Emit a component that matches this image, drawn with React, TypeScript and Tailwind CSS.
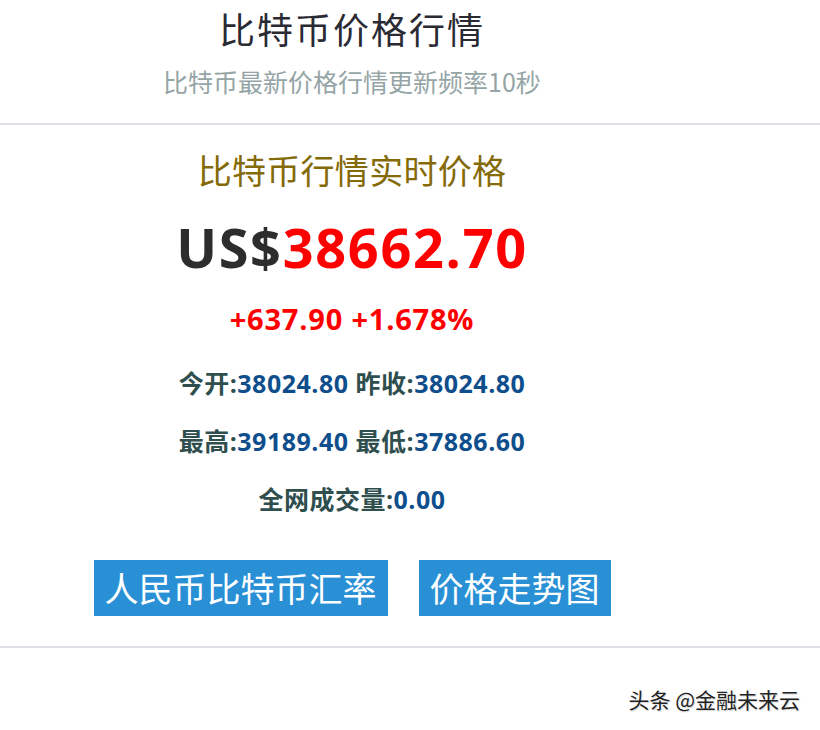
import React from "react";

const cjk = { fontFamily: '"Noto Sans CJK SC", sans-serif' };
const num = { fontFamily: '"Open Sans", "Noto Sans CJK SC", sans-serif' };

function Info({ items }: { items: [string, string][] }) {
  return (
    <div className="h-[32px] leading-[32px] text-[25px] tracking-[0.5px] font-bold" style={num}>
      {items.map(([k, v], i) => (
        <React.Fragment key={i}>
          {i > 0 && " "}
          <span className="text-[#2f4f4f]">{k}:</span>
          <span className="text-[#0f4e8c]">{v}</span>
        </React.Fragment>
      ))}
    </div>
  );
}

export default function App() {
  return (
    <div className="w-[820px] h-[730px] bg-white overflow-hidden" style={cjk}>
      <div className="w-[704px] text-center pt-[8px]">
        <div className="text-[36px] leading-[40px] tracking-[2px] text-[#2a2a33]" style={{ fontFamily: '"Noto Sans CJK SC", serif' }}>
          比特币价格行情
        </div>
        <div className="mt-[18px] text-[25px] leading-[30px] text-[#95a5a6]">
          比特币最新价格行情更新频率10秒
        </div>
      </div>
      <div className="mt-[27px] h-[2px] bg-[#dee2e6]" />
      <div className="w-[704px] text-center">
        <div className="mt-[25px] text-[34px] leading-[40px] tracking-[0.3px] text-[#846a08]">比特币行情实时价格</div>
        <div className="mt-[27px] text-[54px] leading-[60px] tracking-[1.7px] font-bold" style={num}>
          <span className="text-[#2d2d2d]">US$</span>
          <span className="text-[#ff0000]">38662.70</span>
        </div>
        <div className="mt-[25px] text-[29px] leading-[34px] tracking-[0.8px] font-bold text-[#ff0000]" style={num}>
          +637.90 +1.678%
        </div>
        <div className="mt-[31px] flex flex-col gap-[26px]">
          <Info items={[["今开", "38024.80"], ["昨收", "38024.80"]]} />
          <Info items={[["最高", "39189.40"], ["最低", "37886.60"]]} />
          <Info items={[["全网成交量", "0.00"]]} />
        </div>
        <div className="mt-[45px] flex justify-center gap-[31px]">
          <div className="h-[56px] px-[11px] bg-[#2990d6] text-white text-[34px] leading-[56px]">人民币比特币汇率</div>
          <div className="h-[56px] px-[11px] bg-[#2990d6] text-white text-[34px] leading-[56px]">价格走势图</div>
        </div>
      </div>
      <div className="mt-[30px] h-[2px] bg-[#dee2e6]" />
      <div className="flex justify-end pr-[20px] mt-[39px]">
        <div
          className="text-[21px] leading-[24px] text-[#222]"
          style={{ textShadow: "0 0 2px #fff, 1px 1px 1px #ccc" }}
        >
          头条 @金融未来云
        </div>
      </div>
    </div>
  );
}
